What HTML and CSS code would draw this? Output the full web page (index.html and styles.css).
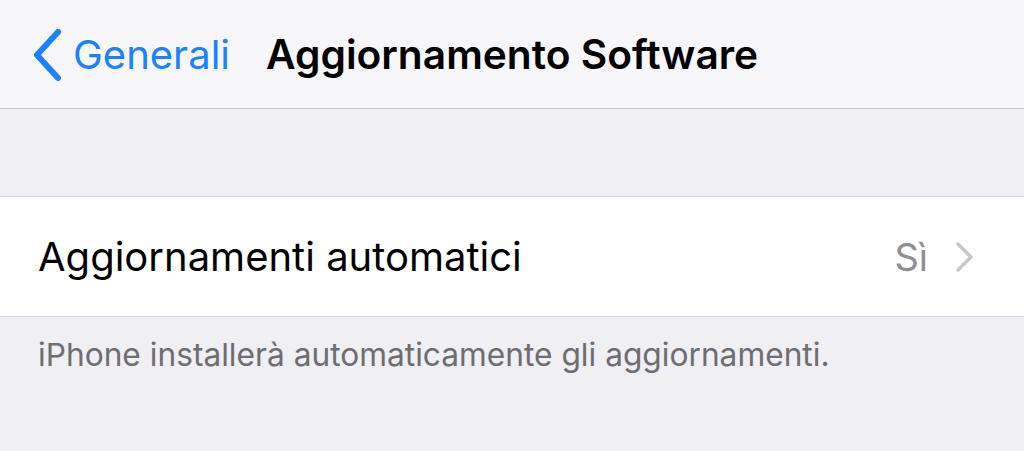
FILE: index.html
```html
<!DOCTYPE html>
<html lang="it">
<head>
<meta charset="utf-8">
<link rel="stylesheet" href="styles.css">
</head>
<body>
<header class="navbar">
  <a class="back">
    <svg class="back-chevron" width="32" height="54" viewBox="0 0 32 54"><path d="M27 4 L6 27 L27 50" fill="none" stroke="#1a82fb" stroke-width="6" stroke-linecap="round" stroke-linejoin="round"/></svg>
    <span class="back-label">Generali</span>
  </a>
  <h1 class="title">Aggiornamento Software</h1>
</header>
<main class="content">
  <section class="group">
    <div class="cell">
      <span class="cell-label">Aggiornamenti automatici</span>
      <span class="cell-detail">Sì</span>
      <svg class="disclosure" width="22" height="32" viewBox="0 0 22 32"><path d="M4 3 L17 16 L4 29" fill="none" stroke="#c7c7cc" stroke-width="3.5" stroke-linecap="round" stroke-linejoin="round"/></svg>
    </div>
  </section>
  <p class="footer">iPhone installerà automaticamente gli aggiornamenti.</p>
</main>
</body>
</html>
```

FILE: styles.css
```css
* { box-sizing: border-box; }
html, body { margin: 0; padding: 0; }
body {
  width: 1024px;
  height: 451px;
  overflow: hidden;
  background: #efeff4;
  font-family: Inter, "Noto Sans", sans-serif;
}
.navbar {
  height: 109px;
  background: #f7f7f9;
  border-bottom: 1px solid #c6c6ca;
  display: flex;
  align-items: center;
  padding-left: 31px;
}
.back {
  display: flex;
  align-items: center;
  color: #1a82fb;
  gap: 10px;
}
.back-chevron { margin-top: 1px; }
.back-label {
  font-size: 40px;
}
.title {
  margin: 0 0 0 36px;
  font-size: 40.7px;
  font-weight: 600;
  color: #000;
}
.content {
  padding-top: 87px;
}
.group {
  background: #fff;
  border-top: 1px solid #d3d3d7;
  border-bottom: 1px solid #d3d3d7;
}
.cell {
  height: 119px;
  display: flex;
  align-items: center;
  padding: 0 48px 0 38px;
}
.cell-label {
  flex: 1;
  font-size: 40px;
  color: #000;
}
.cell-detail {
  font-size: 38px;
  color: #8e8e93;
  margin-right: 26px;
}
.footer {
  margin: 18px 0 0 38px;
  font-size: 31.7px;
  color: #6d6d72;
}
```
